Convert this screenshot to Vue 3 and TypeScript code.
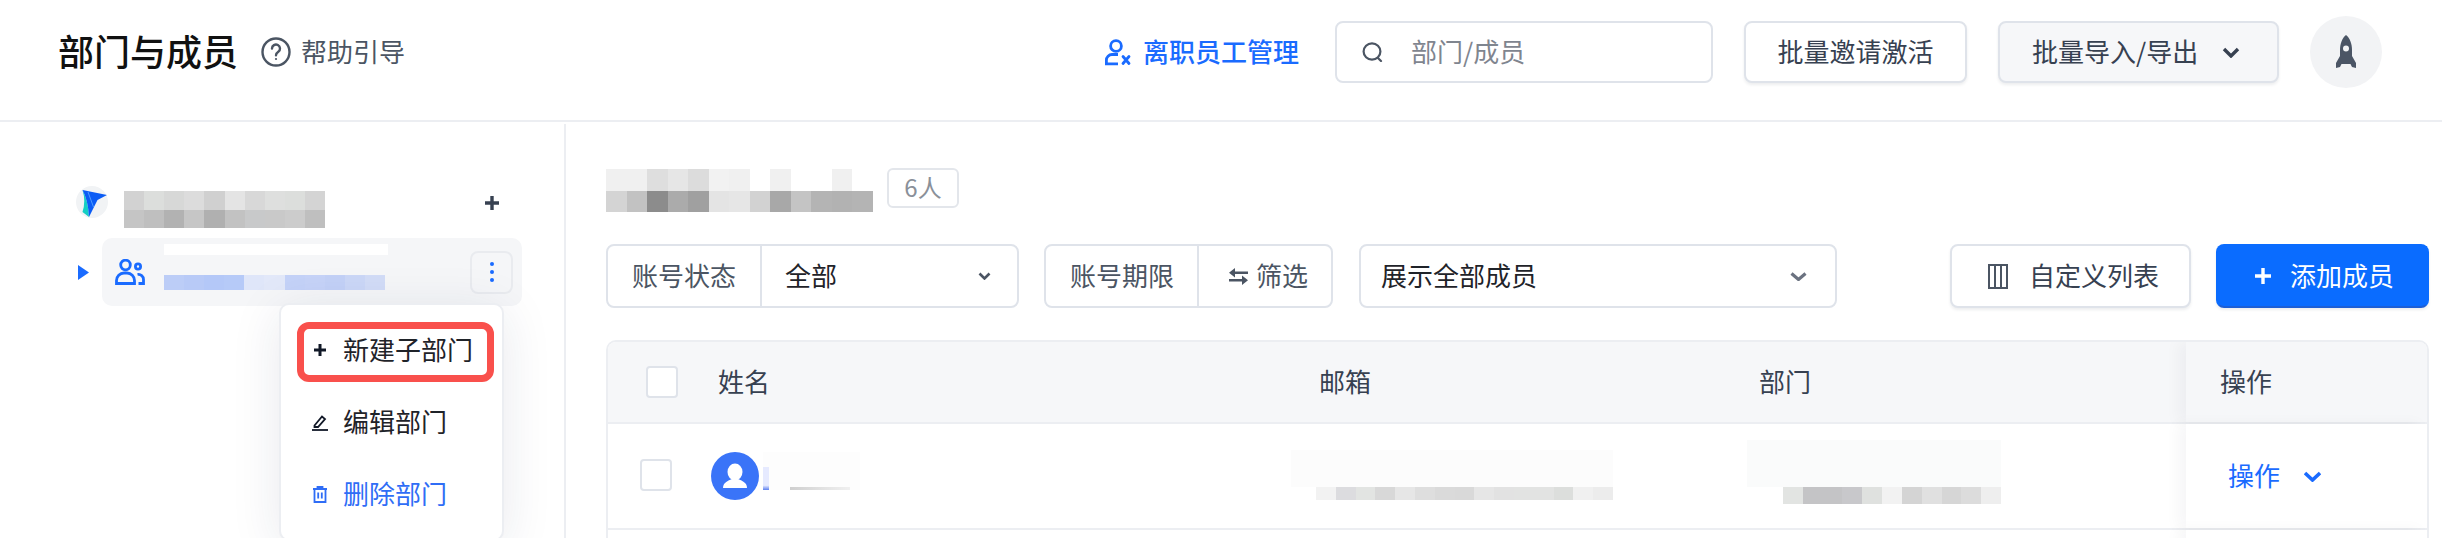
<script setup lang="ts">
/** 打码色块：每个数组是一块被模糊的文字，按行平铺 */
const cols = (colors: string[], rows = 1) => ({
  gridTemplateColumns: `repeat(${colors.length / rows}, 1fr)`,
})

const ROOT_BLUR = (
  '#d2d2d2 #dcdedc #d7d8d7 #dcdcdc #d0d0d0 #e4e4e4 #d8d8d8 #dedfde #dcdedc #d4d4d4 ' +
  '#c5c5c5 #bfbfbf #b2b2b2 #c6c6c6 #b0b0b0 #c2c2c2 #c8c9ca #c9c9c9 #cccccc #bfbfbf'
).split(' ')
const DEPT_BLUR = '#bccdf7 #b8caf7 #b4c8f8 #b6caf8 #dfe6f9 #e2e8f9 #c4d2f8 #c6d3f8 #c3d1f7 #cbd7f7 #d2dcf7'.split(' ')
const TITLE_BLUR = (
  '#f0f0f0 #f0f0f0 #dedede #e6e6e6 #dcdcdc #f2f2f2 #f0f0f0 #ffffff #f0f0f0 #ffffff #ffffff #f0f0f0 #ffffff ' +
  '#d4d4d4 #c2c2c2 #8c8c8c #ababab #a0a0a0 #e4e4e4 #e6e6e6 #d2d2d2 #a8a8a8 #c4c4c4 #b4b4b4 #b2b2b2 #b4b4b4'
).split(' ')
const MAIL_BLUR = '#f2f2f2 #dcdcdf #e2e4e2 #d8d8d8 #e6e6e6 #dedede #dadada #d9d9d9 #e6e6e6 #e2e2e2 #e2e3e2 #e2e3e2 #dcdedc #f0f0f0 #ececec'.split(' ')
const ORG_BLUR = '#e2e4e2 #c4c4c6 #c4c4c6 #c8c8cb #dfe1df #f2f2f2 #d4d4d4 #e0e0e0 #d6d6d6 #dcdcdc #eeeeee'.split(' ')
</script>

<template>
  <div class="page">
    <header class="topbar">
      <h1 class="title">部门与成员</h1>
      <a class="help">
        <svg width="30" height="30" viewBox="0 0 30 30" fill="none" stroke="#4b5563" stroke-width="2.4">
          <circle cx="15" cy="15" r="13.5" />
          <path d="M11 11.5a4 4 0 1 1 6.3 3.3c-1.4 1-2.3 1.7-2.3 3.4" stroke-linecap="round" />
          <circle cx="15" cy="22" r="1.1" fill="#4b5563" stroke="none" />
        </svg>
        <span class="txt">帮助引导</span>
      </a>

      <a class="leave">
        <svg width="26" height="27" viewBox="0 0 26 27" fill="none" stroke="#1a6bff" stroke-width="2.8">
          <circle cx="11" cy="7" r="5.4" />
          <path d="M13 15.5H7a5.6 5.6 0 0 0-5.6 5.6v3.7H13" />
          <path d="M18 17.5l6 7M24 17.5l-6 7" stroke-linecap="round" />
        </svg>
        <span class="txt">离职员工管理</span>
      </a>
      <div class="search">
        <svg width="22" height="20" viewBox="0 0 22 20" fill="none" stroke="#4b5563" stroke-width="2.2">
          <ellipse cx="10" cy="9.5" rx="8.4" ry="8.2" />
          <path d="M16 16l3 3" stroke-linecap="round" />
        </svg>
        <span class="txt">部门/成员</span>
      </div>
      <button class="btn invite"><span class="txt">批量邀请激活</span></button>
      <button class="btn import">
        <span class="txt">批量导入/导出</span>
        <svg width="18" height="11" viewBox="0 0 18 11" fill="none" stroke="#374151" stroke-width="3.4">
          <path d="M2 2l7 7 7-7" />
        </svg>
      </button>
      <div class="avatar">
        <svg width="20" height="34" viewBox="0 0 20 34">
          <path
            fill="#4b5565"
            fill-rule="evenodd"
            d="M10 0c4 3 6 9 6 15v6l4 7v5l-4-1-1.5-3h-9L4 32l-4 1v-5l4-7v-6C4 9 6 3 10 0zm0 10.500a3 3 0 1 0 0 6 3 3 0 0 0 0-6z"
          />
        </svg>
      </div>
    </header>

    <div class="body">
      <aside class="sidebar">
        <div class="root-row">
          <svg class="logo" width="32" height="32" viewBox="0 0 32 32">
            <circle cx="16" cy="16" r="16" fill="#f1f3f5" />
            <path d="M6.500 4Q10 15 6.500 26L13 31Q12 14 6.500 4z" fill="#14cfc4" />
            <path d="M6.500 4L31 9l-9.500 5L13 31Q12 14 6.500 4z" fill="#0b5cf5" />
            <path d="M12 6l5.500 15" stroke="#4d9bff" stroke-width="1" />
          </svg>
          <div class="mosaic root-blur" :style="cols(ROOT_BLUR, 2)">
            <i v-for="(c, i) in ROOT_BLUR" :key="i" :style="{ background: c }" />
          </div>
          <svg class="root-add" width="16" height="16" viewBox="0 0 16 16">
            <path d="M8 1v14M1 8h14" stroke="#374151" stroke-width="3.400" />
          </svg>
        </div>

        <div class="dept-row">
          <svg class="caret" width="11" height="15" viewBox="0 0 11 15">
            <path d="M0 0l11 7.500L0 15z" fill="#1a6bff" />
          </svg>
          <div class="dept-item">
            <svg width="30" height="26" viewBox="0 0 30 26" fill="none" stroke="#1a6bff" stroke-width="2.800">
              <circle cx="10.500" cy="6" r="4.800" />
              <path d="M1.500 24.500v-3a7.500 7.500 0 0 1 7.500-7.500h3a7.500 7.500 0 0 1 7.500 7.500v3z" />
              <circle cx="23" cy="7.500" r="2.600" />
              <path d="M22.500 15.500a5 5 0 0 1 6 5v4h-5" />
            </svg>
            <div class="dept-name">
              <div class="white-strip" />
              <div class="mosaic dept-blur" :style="cols(DEPT_BLUR)">
                <i v-for="(c, i) in DEPT_BLUR" :key="i" :style="{ background: c }" />
              </div>
            </div>
            <button class="more">
              <i /><i /><i />
            </button>
          </div>
        </div>

        <div class="menu">
          <div class="menu-item marked">
            <svg width="18" height="14" viewBox="0 0 18 14">
              <path d="M9 1v12M3 7h12" stroke="#111827" stroke-width="3" />
            </svg>
            <span class="txt">新建子部门</span>
          </div>
          <div class="menu-item">
            <svg width="18" height="18" viewBox="0 0 18 18" fill="none" stroke="#111827" stroke-width="1.800">
              <path d="M3.500 12.500L11 3.500l3 2.500-7 8H3.500z" />
              <path d="M1 17h16" />
            </svg>
            <span class="txt">编辑部门</span>
          </div>
          <div class="menu-item danger">
            <svg width="18" height="17" viewBox="0 0 18 17" fill="none" stroke="#2f6df6" stroke-width="1.800">
              <path d="M2 3h14M6.500 3V1h5v2M3.500 3v13h11V3M7.200 6.500v6M10.800 6.500v6" />
            </svg>
            <span class="txt">删除部门</span>
          </div>
        </div>
      </aside>

      <main class="content">
        <div class="title-row">
          <div class="mosaic title-blur" :style="cols(TITLE_BLUR, 2)">
            <i v-for="(c, i) in TITLE_BLUR" :key="i" :style="{ background: c }" />
          </div>
          <span class="count"><span class="txt">6人</span></span>
        </div>

        <div class="filters">
          <div class="field status">
            <span class="field-label"><span class="txt">账号状态</span></span>
            <span class="field-value">
              <span class="txt">全部</span>
              <svg width="13" height="8" viewBox="0 0 13 8" fill="none" stroke="#4b5563" stroke-width="2.600">
                <path d="M1.500 1.500l5 5 5-5" />
              </svg>
            </span>
          </div>
          <div class="field expire">
            <span class="field-label"><span class="txt">账号期限</span></span>
            <span class="field-filter">
              <svg width="19" height="17" viewBox="0 0 19 17" fill="#4b5563">
                <path d="M6 0v3.500h13v2.500H6v3.500L0 4.750zM13 7.500V11H0v2.500h13V17l6-4.750z" />
              </svg>
              <span class="txt">筛选</span>
            </span>
          </div>
          <div class="field all">
            <span class="txt">展示全部成员</span>
            <svg width="17" height="9" viewBox="0 0 17 9" fill="none" stroke="#6b7280" stroke-width="3.200">
              <path d="M1.500 1.500l7 6 7-6" />
            </svg>
          </div>
          <button class="btn columns">
            <svg width="20" height="25" viewBox="0 0 20 25" fill="none" stroke="#4b5563" stroke-width="2">
              <path d="M1 1h18v23H1zM7 1v23M13 1v23" />
            </svg>
            <span class="txt">自定义列表</span>
          </button>
          <button class="btn add">
            <svg width="16" height="16" viewBox="0 0 16 16">
              <path d="M8 0v16M0 8h16" stroke="#fff" stroke-width="3.400" />
            </svg>
            <span class="txt">添加成员</span>
          </button>
        </div>

        <div class="table">
          <div class="table-head">
            <span class="head-check"><i class="check" /></span>
            <span class="txt">姓名</span>
            <span class="txt">邮箱</span>
            <span class="txt">部门</span>
            <span class="op-head"><span class="txt">操作</span></span>
          </div>
          <div class="table-row">
            <span class="row-check"><i class="check" /></span>
            <div class="cell-name">
              <svg width="48" height="48" viewBox="0 0 48 48">
                <circle cx="24" cy="24" r="24" fill="#3a74f8" />
                <ellipse cx="24" cy="20" rx="7.500" ry="8.500" fill="#fff" />
                <path d="M12 36c0-5 4-7 9-9h6c5 2 9 4 9 9z" fill="#fff" />
              </svg>
              <div class="name-blur">
                <i class="name-bar" />
                <i class="name-line" />
              </div>
            </div>
            <div class="cell-blur mail">
              <div class="faint mail-faint" />
              <div class="mosaic mail-blur" :style="cols(MAIL_BLUR)">
                <i v-for="(c, i) in MAIL_BLUR" :key="i" :style="{ background: c }" />
              </div>
            </div>
            <div class="cell-blur org">
              <div class="faint org-faint" />
              <div class="mosaic org-blur" :style="cols(ORG_BLUR)">
                <i v-for="(c, i) in ORG_BLUR" :key="i" :style="{ background: c }" />
              </div>
            </div>
            <div class="op-cell">
              <span class="txt">操作</span>
              <svg width="17" height="11" viewBox="0 0 17 11" fill="none" stroke="#1a6bff" stroke-width="3.600">
                <path d="M1 2l7.500 7L16 2" />
              </svg>
            </div>
          </div>
          <div class="table-row">
            <div class="op-cell" />
          </div>
        </div>
      </main>
    </div>
  </div>
</template>

<style>
body {
  margin: 0;
  background: #fff;
}
</style>

<style scoped>
.page {
  width: 2442px;
  height: 538px;
  overflow: hidden;
  font-family: "Noto Sans CJK SC", "Noto Sans", sans-serif;
  font-size: 26px;
  color: #1f2329;
}

/* Noto 的字面比行盒中心偏低，抬一点 */
.txt {
  margin-bottom: 4px;
}

svg {
  flex: none;
  display: block;
}

button {
  font: inherit;
}

.mosaic {
  display: grid;
}

.topbar {
  box-sizing: border-box;
  height: 122px;
  padding: 0 60px 16px 58px;
  display: flex;
  align-items: center;
  border-bottom: 2px solid #eceef2;
}

.title {
  margin: 0 0 5px;
  font-size: 36px;
  font-weight: 500;
  color: #111;
}

.help {
  margin-left: 23px;
  display: flex;
  align-items: center;
  gap: 10px;
  color: #4b5563;
}

.leave {
  margin-left: auto;
  display: flex;
  align-items: center;
  gap: 12px;
  color: #1a6bff;
  font-weight: 500;
}

.search {
  box-sizing: border-box;
  width: 378px;
  height: 62px;
  margin-left: 36px;
  padding-left: 25px;
  display: flex;
  align-items: center;
  gap: 27px;
  color: #7f858f;
  border: 2px solid #dfe3ea;
  border-radius: 8px;
}

.btn {
  box-sizing: border-box;
  height: 62px;
  display: flex;
  align-items: center;
  color: #374151;
  background: #fff;
  border: 2px solid #dfe3ea;
  border-radius: 8px;
  box-shadow: 0 2px 3px rgba(31, 41, 55, 0.08);
}

.invite {
  width: 223px;
  margin-left: 31px;
  justify-content: center;
}

.import {
  width: 281px;
  margin-left: 31px;
  padding: 0 0 0 32px;
  gap: 24px;
  background: #f6f7f9;
}

.avatar {
  width: 72px;
  height: 72px;
  margin-left: 31px;
  display: flex;
  align-items: center;
  justify-content: center;
  border-radius: 50%;
  background: #f2f3f5;
}

.body {
  display: flex;
  height: 416px;
}

.sidebar {
  position: relative;
  box-sizing: border-box;
  width: 566px;
  margin-top: 2px;
  padding: 62px 0 0 76px;
  border-right: 2px solid #eceef2;
}

.root-row {
  height: 52px;
  display: flex;
  align-items: flex-start;
}

.root-blur {
  width: 201px;
  height: 37px;
  margin: 5px 0 0 16px;
}

.root-add {
  margin: 9px 0 0 159px;
}

.dept-row {
  display: flex;
  align-items: center;
}

.caret {
  margin-left: 2px;
}

.dept-item {
  box-sizing: border-box;
  width: 420px;
  height: 68px;
  margin-left: 13px;
  padding: 0 9px 0 13px;
  display: flex;
  align-items: center;
  background: #f5f6f8;
  border-radius: 10px;
}

.dept-name {
  width: 224px;
  height: 68px;
  margin-left: 19px;
  padding-top: 6px;
  box-sizing: border-box;
}

.white-strip {
  height: 11px;
  background: #fff;
}

.dept-blur {
  width: 221px;
  height: 15px;
  margin-top: 20px;
}

.more {
  box-sizing: border-box;
  width: 43px;
  height: 43px;
  margin-left: auto;
  padding: 0;
  display: flex;
  flex-direction: column;
  align-items: center;
  justify-content: center;
  gap: 4px;
  background: #f5f6f8;
  border: 2px solid #e9ebef;
  border-radius: 8px;
}

.more i {
  width: 4px;
  height: 4px;
  border-radius: 50%;
  background: #1a6bff;
}

.menu {
  position: absolute;
  left: 279px;
  top: 179px;
  box-sizing: border-box;
  width: 225px;
  height: 238px;
  padding-top: 9px;
  background: #fff;
  border: 2px solid #eceef2;
  border-radius: 10px;
  box-shadow: 0 8px 50px rgba(30, 40, 80, 0.1);
}

.menu-item {
  position: relative;
  height: 72px;
  padding-left: 30px;
  display: flex;
  align-items: center;
  gap: 14px;
  color: #1f2329;
}

.marked::after {
  content: "";
  position: absolute;
  left: 16px;
  right: 8px;
  top: 8px;
  bottom: 4px;
  border: 7px solid #f9504c;
  border-radius: 12px;
}

.danger {
  color: #2f6df6;
}

.content {
  flex: 1;
  min-width: 0;
  padding: 46px 13px 0 40px;
}

.title-row {
  height: 40px;
  display: flex;
}

.title-blur {
  width: 267px;
  height: 43px;
  margin-top: 1px;
}

.count {
  box-sizing: border-box;
  width: 72px;
  height: 40px;
  margin-left: 14px;
  display: flex;
  align-items: center;
  justify-content: center;
  font-size: 24px;
  color: #8a9099;
  border: 2px solid #e3e6eb;
  border-radius: 6px;
}

.filters {
  height: 64px;
  margin-top: 36px;
  display: flex;
}

.field {
  box-sizing: border-box;
  height: 64px;
  display: flex;
  align-items: center;
  border: 2px solid #dfe3ea;
  border-radius: 8px;
}

.status {
  width: 413px;
}

.expire {
  width: 289px;
  margin-left: 25px;
}

.all {
  width: 478px;
  margin-left: 26px;
  padding: 0 28px 0 20px;
  justify-content: space-between;
}

.field-label {
  box-sizing: border-box;
  height: 100%;
  display: flex;
  align-items: center;
  color: #4b5563;
  border-right: 2px solid #dfe3ea;
}

.status .field-label {
  width: 154px;
  padding-left: 24px;
}

.expire .field-label {
  width: 153px;
  padding-left: 24px;
}

.field-value {
  flex: 1;
  padding: 0 26px 0 23px;
  display: flex;
  align-items: center;
  justify-content: space-between;
}

.field-filter {
  padding-left: 30px;
  display: flex;
  align-items: center;
  gap: 8px;
  color: #4b5563;
}

.columns {
  width: 241px;
  height: 64px;
  margin-left: auto;
  padding: 0 0 0 36px;
  gap: 21px;
}

.add {
  width: 213px;
  height: 64px;
  margin-left: 25px;
  padding: 0 0 0 37px;
  gap: 19px;
  color: #fff;
  background: #0a6cff;
  border-color: #0a6cff;
  border-bottom-color: #1d5fd6;
}

.table {
  margin-top: 32px;
  height: 220px;
  border: 2px solid #eceef2;
  border-bottom: 0;
  border-radius: 10px 10px 0 0;
  overflow: hidden;
}

.table-head {
  box-sizing: border-box;
  height: 82px;
  display: grid;
  grid-template-columns: 110px 601px 440px 427px 1fr;
  align-items: center;
  color: #374151;
  background: #f6f7f9;
  border-bottom: 2px solid #eceef2;
}

.head-check {
  padding-left: 38px;
}

.check {
  box-sizing: border-box;
  display: block;
  width: 32px;
  height: 32px;
  background: #fff;
  border: 2px solid #dfe3ea;
  border-radius: 4px;
}

.op-head {
  align-self: stretch;
  padding-left: 34px;
  display: flex;
  align-items: center;
  background: #f6f7f9;
  box-shadow: -8px 0 14px rgba(17, 24, 39, 0.04);
}

.table-row {
  box-sizing: border-box;
  height: 106px;
  display: grid;
  grid-template-columns: 103px 580px 456px 439px 1fr;
  border-bottom: 2px solid #eceef2;
}

.row-check {
  padding: 35px 0 0 32px;
}

.cell-name {
  padding-top: 28px;
  display: flex;
  align-items: flex-start;
}

.name-blur {
  width: 97px;
  height: 38px;
  position: relative;
  margin-left: 4px;
  background: #fdfdfd;
  display: flex;
  align-items: flex-end;
}

.name-bar {
  width: 6px;
  height: 23px;
  background: linear-gradient(#e6eaff 80%, #5b7ff0);
}

.name-line {
  width: 60px;
  height: 3px;
  margin-left: 21px;
  background: linear-gradient(90deg, #cfcfcf, #e4e4e4 60%, #f0f0f0);
}

.cell-blur {
  display: flex;
  flex-direction: column;
}

.mail {
  padding-top: 26px;
}

.org {
  padding-top: 16px;
}

.mail-faint {
  width: 322px;
  height: 37px;
  background: #fcfcfc;
}

.mail-blur {
  width: 297px;
  height: 13px;
  margin-left: 25px;
}

.org-faint {
  width: 254px;
  height: 47px;
  background: #fafbfb;
}

.org-blur {
  width: 218px;
  height: 17px;
  margin-left: 36px;
}

.op-cell {
  height: 104px;
  padding-left: 42px;
  display: flex;
  align-items: center;
  gap: 24px;
  color: #1a6bff;
  background: #fff;
  box-shadow: -8px 0 14px rgba(17, 24, 39, 0.04);
}

.table-row:last-child {
  grid-template-columns: 1578px 1fr;
}

.table-row:last-child .op-cell {
  grid-column: 2;
}
</style>
